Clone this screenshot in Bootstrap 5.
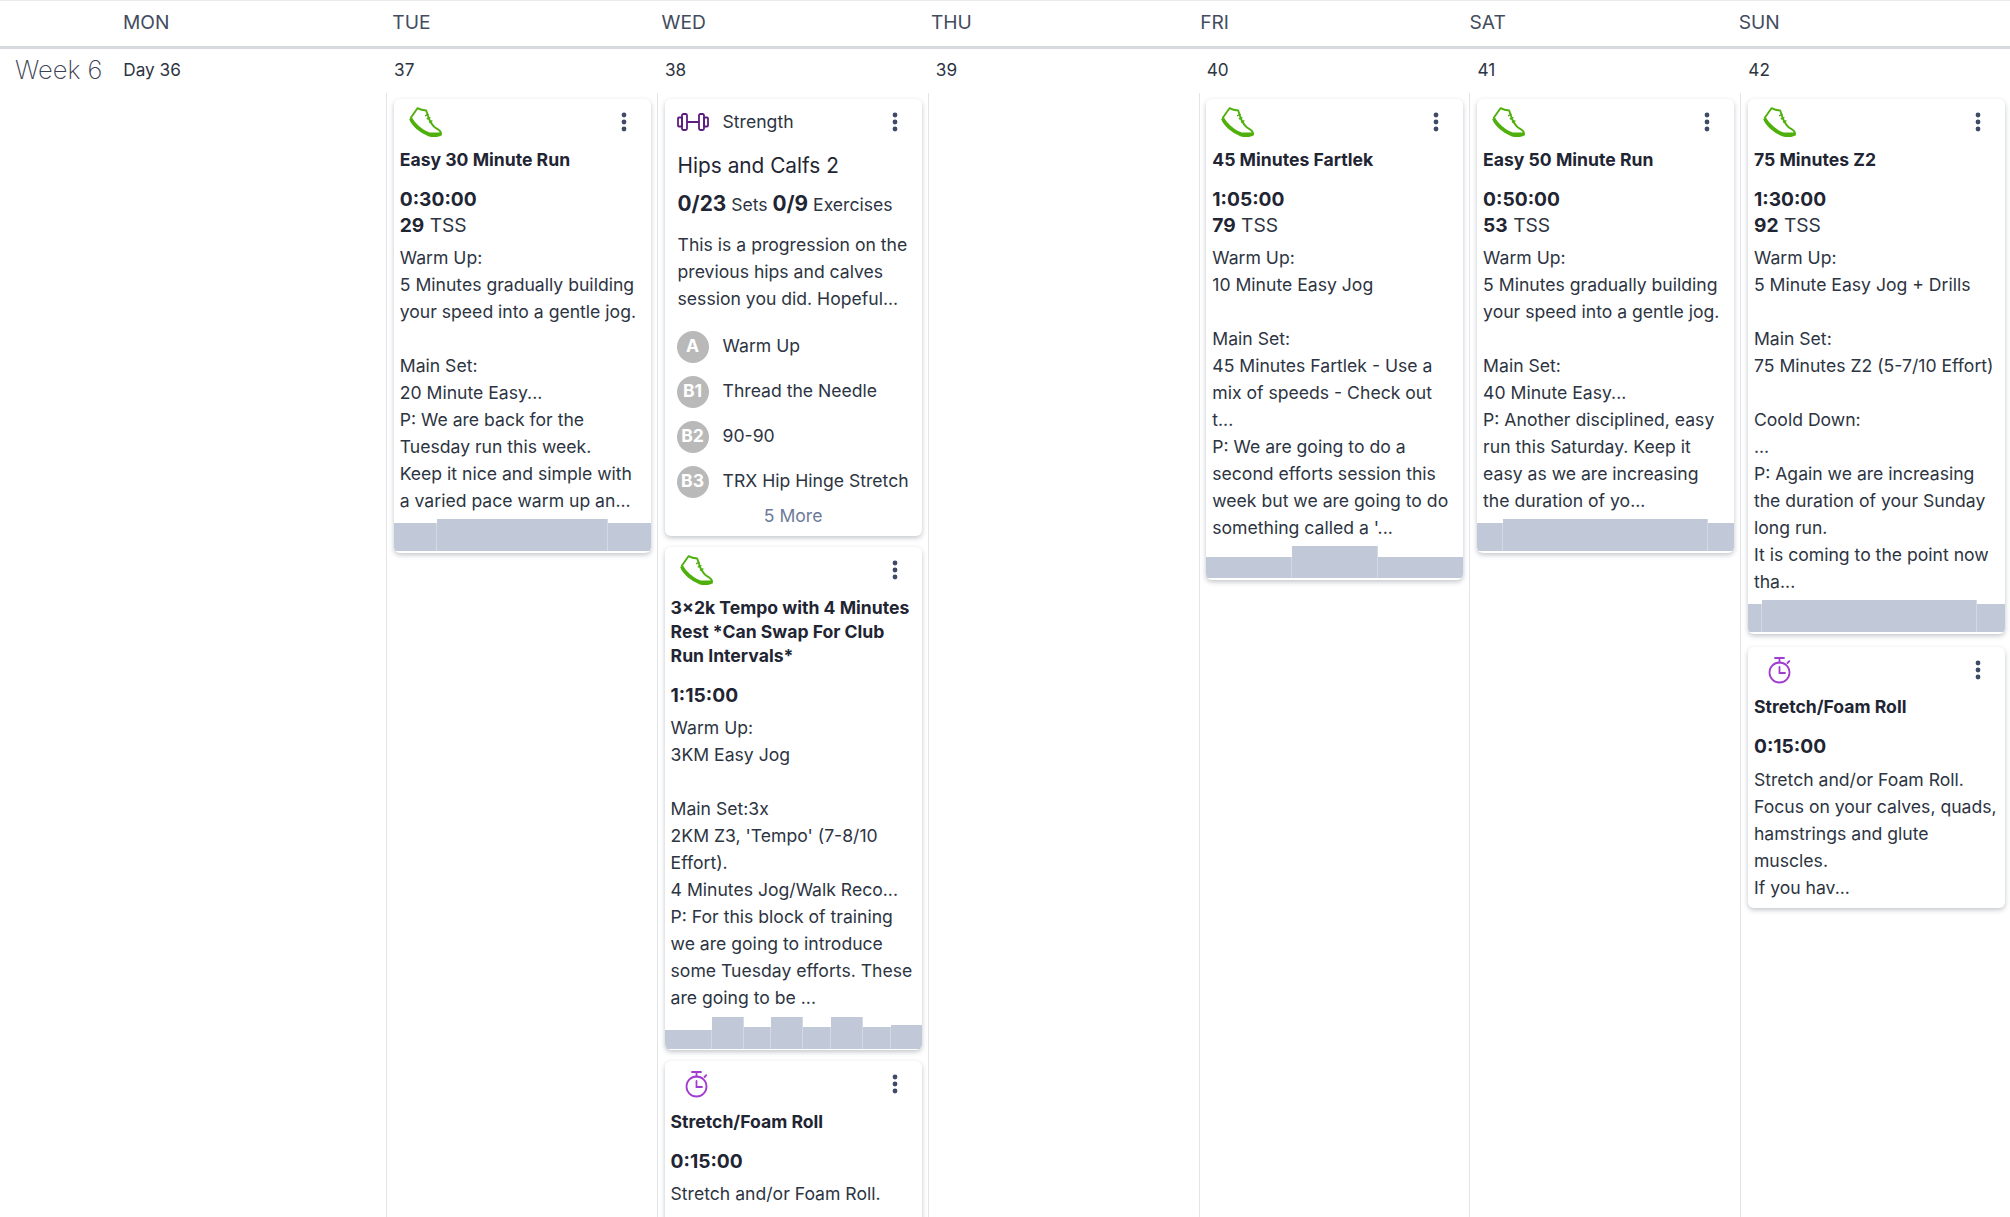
<!DOCTYPE html>
<html lang="en">
<head>
<meta charset="utf-8">
<title>Training plan - Week 6</title>
<link href="https://cdn.jsdelivr.net/npm/bootstrap@5.3.0/dist/css/bootstrap.min.css" rel="stylesheet">
<style>
html,body{height:100%;}
body{font-family:Inter,"Liberation Sans",sans-serif;font-size:17.6px;color:#2d3442;background:#fff;overflow:hidden;}
.cal-head{display:grid;grid-template-columns:115px repeat(7,269.3px);height:49px;border-top:1px solid #e8eaed;border-bottom:3px solid #d6d9de;}
.cal-days,.cal-body{display:grid;grid-template-columns:115.25px repeat(7,270.85px);}
.cal-head-label{font-size:19.2px;line-height:43px;color:#434c5e;padding-left:8px;}
.cal-days{height:44px;}
.week-label{font-size:25.6px;font-weight:200;color:#3a4150;padding-left:15px;line-height:42px;}
.day-label{font-size:17.2px;padding-left:8px;color:#2d3442;line-height:42px;}
.cal-col{border-left:1px solid #e2e4e8;padding:6px 0 0 6.65px;min-height:1124px;}
.cal-col-first{border-left:0;}
.wk-card{width:257px;background:#fff;border:0;border-radius:6px;box-shadow:0 2px 5px rgba(40,50,70,.28);margin-bottom:11px;overflow:hidden;}
.wk-gap{margin-bottom:13px;}
.wk-head{height:46px;padding:0 22px 0 15px;}
.kebab-icon{width:10px;height:20px;fill:#3e4a66;}
.shoe-icon{width:33px;height:30px;}
.clock-icon{width:33px;height:28px;}
.bell-icon{width:32px;height:18px;}
.wk-pad{padding:0 6px;}
.wk-end{padding-bottom:2px;}
.wk-title{font-size:17.6px;line-height:24px;font-weight:700;color:#1f2533;margin:2.5px 0 0;}
.wk-time{font-size:19.2px;line-height:27px;font-weight:700;color:#1f2533;margin-top:14px;}
.wk-tss{font-size:19.2px;line-height:25.5px;color:#2d3442;}
.wk-tss b{font-weight:700;color:#1f2533;}
.wk-text{white-space:pre-line;line-height:27px;margin-top:5.5px;padding-bottom:5.5px;color:#2d3442;}
.wk-strip{height:32px;margin:0 0 1.5px;}
.wk-bar{background:#c1c9d8;border-right:1px solid #d3d9e3;flex:none;}
.wk-bar:last-child{border-right:0;}
.st-head{height:46px;padding:0 22px 0 12px;gap:14px;}
.st-pad{padding:0 8px 0 13px;}
.st-listwrap{padding:0 8px 0 12px;}
.st-title{font-size:20.8px;line-height:30px;font-weight:400;color:#1f2533;margin:6px 0 0;}
.st-stats{line-height:30px;margin-top:7.5px;white-space:nowrap;}
.st-stats b{font-size:20.8px;font-weight:700;color:#1f2533;}
.st-desc{line-height:27px;margin-top:11px;}
.st-list{margin-top:19px;gap:13px;}
.st-dot{width:32px;height:32px;background:#b9b9b9;color:#fff;font-weight:700;flex:none;}
.st-row{gap:14px;}
.st-more{color:#6d7a99;line-height:24px;margin-top:6.5px;padding-bottom:8px;}
</style>
</head>
<body>
<svg width="0" height="0" class="d-block" aria-hidden="true">
  <symbol id="kebab" viewBox="0 0 10 20"><circle cx="5" cy="3" r="2.4"/><circle cx="5" cy="10" r="2.4"/><circle cx="5" cy="17" r="2.4"/></symbol>
  <symbol id="shoe" viewBox="0 0 33 30">
    <path d="M8.500 1.200 1.800 10.800 5.500 16C10 21 15 25 20.500 26.500H32C32 23.500 29 22.500 26 20.500 23.500 18.800 21.800 15.500 20 12L17.200 3.500C14 3.400 11 2.600 8.500 1.200Z" fill="none" stroke="#4fb00c" stroke-width="1.900" stroke-linejoin="round"/>
    <path d="M1.600 11.500C4 18 12 24.800 20.500 28 24 29 28.500 28.800 32.500 26.800" fill="none" stroke="#4fb00c" stroke-width="3.200"/>
    <path d="M16 8.800l3.600-1.600M17.800 12l3.600-1.600M20 15.400l3.400-1.800" fill="none" stroke="#4fb00c" stroke-width="1.400"/>
  </symbol>
  <symbol id="clock" viewBox="0 0 33 28">
    <g fill="none" stroke="#a03ccf" stroke-width="1.800" stroke-linecap="round">
      <circle cx="16.500" cy="16.500" r="10"/>
      <path d="M12 2h9M16.500 2v4.500M24.500 7l1.800-1.800M16.500 11v6h5.500"/>
    </g>
  </symbol>
  <symbol id="bell" viewBox="0 0 32 18">
    <g fill="none" stroke="#5b1c7e" stroke-width="1.800" stroke-linejoin="round">
      <rect x="1" y="4.500" width="4" height="9" rx="1"/>
      <rect x="5" y="1" width="5" height="16" rx="1.500"/>
      <rect x="22" y="1" width="5" height="16" rx="1.500"/>
      <rect x="27" y="4.500" width="4" height="9" rx="1"/>
      <path d="M10 9h12"/>
    </g>
  </symbol>
</svg>

<div class="cal-head">
  <div></div>
  <div class="cal-head-label">MON</div>
  <div class="cal-head-label">TUE</div>
  <div class="cal-head-label">WED</div>
  <div class="cal-head-label">THU</div>
  <div class="cal-head-label">FRI</div>
  <div class="cal-head-label">SAT</div>
  <div class="cal-head-label">SUN</div>
</div>

<div class="cal-days">
  <div class="week-label">Week 6</div>
  <div class="day-label">Day 36</div>
  <div class="day-label">37</div>
  <div class="day-label">38</div>
  <div class="day-label">39</div>
  <div class="day-label">40</div>
  <div class="day-label">41</div>
  <div class="day-label">42</div>
</div>

<div class="cal-body">
  <div></div>
  <div class="cal-col cal-col-first"></div>

  <div class="cal-col">
    <div class="card wk-card">
      <div class="wk-head d-flex align-items-center justify-content-between">
        <svg class="shoe-icon"><use href="#shoe"/></svg><svg class="kebab-icon"><use href="#kebab"/></svg>
      </div>
      <div class="wk-pad">
        <h6 class="wk-title">Easy 30 Minute Run</h6>
        <div class="wk-time">0:30:00</div>
        <div class="wk-tss"><b>29</b> TSS</div>
        <div class="wk-text">Warm Up:
5 Minutes gradually building your speed into a gentle jog.

Main Set:
20 Minute Easy...
P: We are back for the Tuesday run this week.
Keep it nice and simple with a varied pace warm up an...</div>
      </div>
      <div class="wk-strip d-flex align-items-end">
        <div class="wk-bar" style="width:43px;height:28px"></div>
        <div class="wk-bar" style="width:171px;height:32px"></div>
        <div class="wk-bar" style="width:43px;height:28px"></div>
      </div>
    </div>
  </div>

  <div class="cal-col">
    <div class="card wk-card">
      <div class="st-head d-flex align-items-center">
        <svg class="bell-icon"><use href="#bell"/></svg>
        <span class="flex-grow-1">Strength</span>
        <svg class="kebab-icon"><use href="#kebab"/></svg>
      </div>
      <div class="st-pad">
        <h5 class="st-title">Hips and Calfs 2</h5>
        <div class="st-stats"><b>0/23</b> Sets <b>0/9</b> Exercises</div>
        <div class="st-desc">This is a progression on the previous hips and calves session you did. Hopeful...</div>
      </div>
      <div class="st-listwrap">
        <div class="st-list d-flex flex-column">
          <div class="st-row d-flex align-items-center"><span class="st-dot rounded-circle d-flex align-items-center justify-content-center">A</span><span>Warm Up</span></div>
          <div class="st-row d-flex align-items-center"><span class="st-dot rounded-circle d-flex align-items-center justify-content-center">B1</span><span>Thread the Needle</span></div>
          <div class="st-row d-flex align-items-center"><span class="st-dot rounded-circle d-flex align-items-center justify-content-center">B2</span><span>90-90</span></div>
          <div class="st-row d-flex align-items-center"><span class="st-dot rounded-circle d-flex align-items-center justify-content-center">B3</span><span>TRX Hip Hinge Stretch</span></div>
        </div>
      </div>
      <div class="st-more text-center">5 More</div>
    </div>

    <div class="card wk-card">
      <div class="wk-head d-flex align-items-center justify-content-between">
        <svg class="shoe-icon"><use href="#shoe"/></svg><svg class="kebab-icon"><use href="#kebab"/></svg>
      </div>
      <div class="wk-pad">
        <h6 class="wk-title">3×2k Tempo with 4 Minutes Rest *Can Swap For Club Run Intervals*</h6>
        <div class="wk-time">1:15:00</div>
        <div class="wk-text">Warm Up:
3KM Easy Jog

Main Set:3x
2KM Z3, 'Tempo' (7-8/10 Effort).
4 Minutes Jog/Walk Reco...
P: For this block of training we are going to introduce some Tuesday efforts. These are going to be ...</div>
      </div>
      <div class="wk-strip d-flex align-items-end">
        <div class="wk-bar" style="width:47px;height:18.500px"></div>
        <div class="wk-bar" style="width:32px;height:32px"></div>
        <div class="wk-bar" style="width:27px;height:22px"></div>
        <div class="wk-bar" style="width:32px;height:32px"></div>
        <div class="wk-bar" style="width:28px;height:22px"></div>
        <div class="wk-bar" style="width:32px;height:32px"></div>
        <div class="wk-bar" style="width:28px;height:22px"></div>
        <div class="wk-bar" style="width:31px;height:24px"></div>
      </div>
    </div>

    <div class="card wk-card">
      <div class="wk-head d-flex align-items-center justify-content-between">
        <svg class="clock-icon"><use href="#clock"/></svg><svg class="kebab-icon"><use href="#kebab"/></svg>
      </div>
      <div class="wk-pad pb-5">
        <h6 class="wk-title">Stretch/Foam Roll</h6>
        <div class="wk-time">0:15:00</div>
        <div class="wk-text">Stretch and/or Foam Roll.</div>
      </div>
    </div>
  </div>

  <div class="cal-col"></div>

  <div class="cal-col">
    <div class="card wk-card">
      <div class="wk-head d-flex align-items-center justify-content-between">
        <svg class="shoe-icon"><use href="#shoe"/></svg><svg class="kebab-icon"><use href="#kebab"/></svg>
      </div>
      <div class="wk-pad">
        <h6 class="wk-title">45 Minutes Fartlek</h6>
        <div class="wk-time">1:05:00</div>
        <div class="wk-tss"><b>79</b> TSS</div>
        <div class="wk-text">Warm Up:
10 Minute Easy Jog

Main Set:
45 Minutes Fartlek - Use a mix of speeds - Check out t...
P: We are going to do a second efforts session this week but we are going to do something called a '...</div>
      </div>
      <div class="wk-strip d-flex align-items-end">
        <div class="wk-bar" style="width:86px;height:21px"></div>
        <div class="wk-bar" style="width:86px;height:32px"></div>
        <div class="wk-bar" style="width:85px;height:21px"></div>
      </div>
    </div>
  </div>

  <div class="cal-col">
    <div class="card wk-card">
      <div class="wk-head d-flex align-items-center justify-content-between">
        <svg class="shoe-icon"><use href="#shoe"/></svg><svg class="kebab-icon"><use href="#kebab"/></svg>
      </div>
      <div class="wk-pad">
        <h6 class="wk-title">Easy 50 Minute Run</h6>
        <div class="wk-time">0:50:00</div>
        <div class="wk-tss"><b>53</b> TSS</div>
        <div class="wk-text">Warm Up:
5 Minutes gradually building your speed into a gentle jog.

Main Set:
40 Minute Easy...
P: Another disciplined, easy run this Saturday. Keep it easy as we are increasing the duration of yo...</div>
      </div>
      <div class="wk-strip d-flex align-items-end">
        <div class="wk-bar" style="width:26px;height:28px"></div>
        <div class="wk-bar" style="width:205px;height:32px"></div>
        <div class="wk-bar" style="width:26px;height:28px"></div>
      </div>
    </div>
  </div>

  <div class="cal-col">
    <div class="card wk-card wk-gap">
      <div class="wk-head d-flex align-items-center justify-content-between">
        <svg class="shoe-icon"><use href="#shoe"/></svg><svg class="kebab-icon"><use href="#kebab"/></svg>
      </div>
      <div class="wk-pad">
        <h6 class="wk-title">75 Minutes Z2</h6>
        <div class="wk-time">1:30:00</div>
        <div class="wk-tss"><b>92</b> TSS</div>
        <div class="wk-text">Warm Up:
5 Minute Easy Jog + Drills

Main Set:
75 Minutes Z2 (5-7/10 Effort)

Coold Down:
...
P: Again we are increasing the duration of your Sunday long run.
It is coming to the point now tha...</div>
      </div>
      <div class="wk-strip d-flex align-items-end">
        <div class="wk-bar" style="width:14px;height:28px"></div>
        <div class="wk-bar" style="width:215px;height:32px"></div>
        <div class="wk-bar" style="width:28px;height:28px"></div>
      </div>
    </div>

    <div class="card wk-card">
      <div class="wk-head d-flex align-items-center justify-content-between">
        <svg class="clock-icon"><use href="#clock"/></svg><svg class="kebab-icon"><use href="#kebab"/></svg>
      </div>
      <div class="wk-pad wk-end">
        <h6 class="wk-title">Stretch/Foam Roll</h6>
        <div class="wk-time">0:15:00</div>
        <div class="wk-text">Stretch and/or Foam Roll.
Focus on your calves, quads, hamstrings and glute muscles.
If you hav...</div>
      </div>
    </div>
  </div>
</div>
<script src="https://cdn.jsdelivr.net/npm/bootstrap@5.3.0/dist/js/bootstrap.bundle.min.js"></script>
</body>
</html>
